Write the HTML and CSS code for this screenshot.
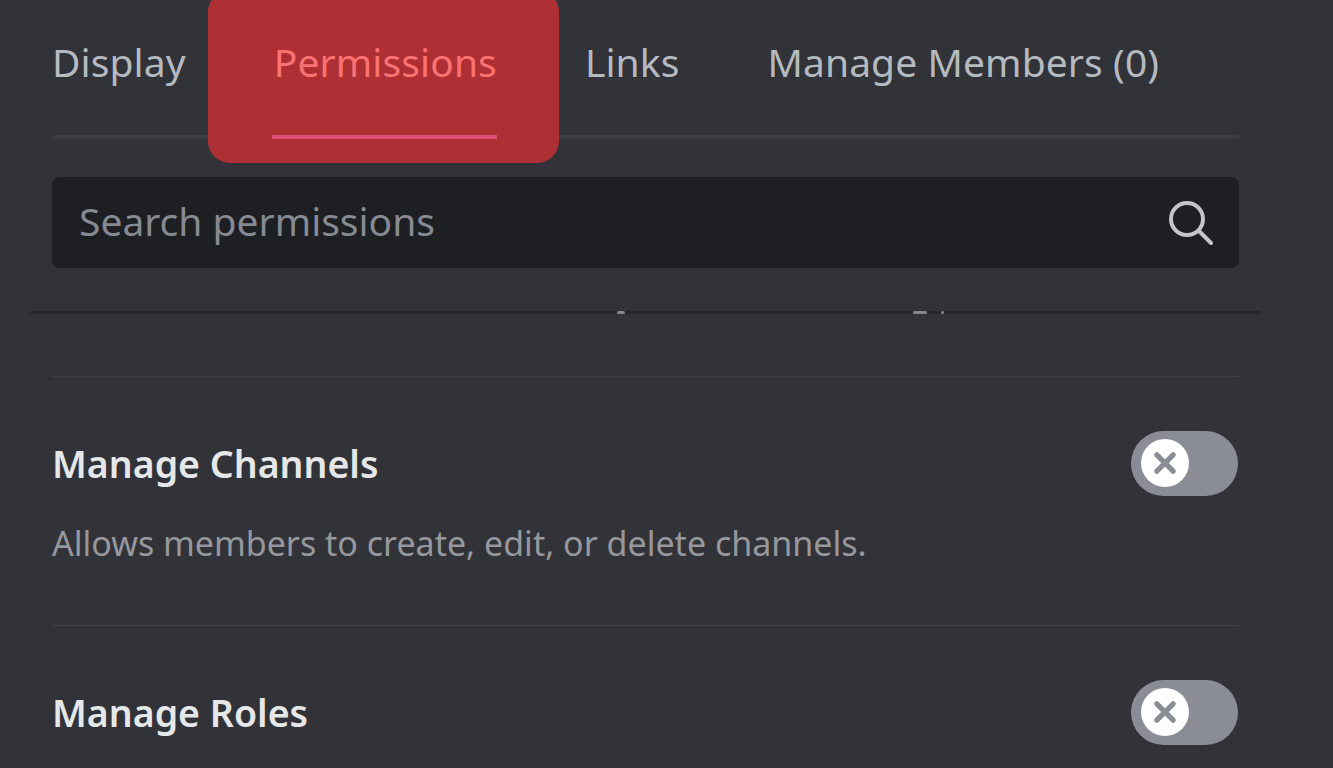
FILE: index.html
```html
<!DOCTYPE html>
<html lang="en">
<head>
    <meta charset="UTF-8">
    <meta name="viewport" content="width=device-width, initial-scale=1.0">
    <title>Edit Role - Permissions</title>
    <link rel="stylesheet" href="styles.css">
</head>
<body>
    <div class="page">
        <nav class="tabs">
            <a class="tab">Display</a>
            <a class="tab tab-active">Permissions</a>
            <a class="tab">Links</a>
            <a class="tab">Manage Members (0)</a>
        </nav>

        <div class="search">
            <span class="search-text">Search permissions</span>
            <svg class="search-icon" viewBox="0 0 46 46" fill="none" stroke="#c3c5cb" stroke-width="4" stroke-linecap="round">
                <circle cx="19" cy="19" r="16"></circle>
                <path d="M31 31 L43 43"></path>
            </svg>
        </div>

        <div class="divider">
            <span class="speck speck-a"></span>
            <span class="speck speck-b"></span>
            <span class="speck speck-c"></span>
        </div>

        <section class="perm perm-first">
            <div class="perm-head">
                <h3 class="perm-title">Manage Channels</h3>
                <div class="switch">
                    <span class="knob">
                        <svg viewBox="0 0 24 24" fill="none" stroke="#8a8c96" stroke-width="4.5" stroke-linecap="round">
                            <path d="M5 5 L19 19 M19 5 L5 19"></path>
                        </svg>
                    </span>
                </div>
            </div>
            <p class="perm-desc">Allows members to create, edit, or delete channels.</p>
        </section>

        <section class="perm">
            <div class="perm-head">
                <h3 class="perm-title">Manage Roles</h3>
                <div class="switch">
                    <span class="knob">
                        <svg viewBox="0 0 24 24" fill="none" stroke="#8a8c96" stroke-width="4.5" stroke-linecap="round">
                            <path d="M5 5 L19 19 M19 5 L5 19"></path>
                        </svg>
                    </span>
                </div>
            </div>
        </section>
    </div>
</body>
</html>
```

FILE: styles.css
```css
html, body {
    margin: 0;
    padding: 0;
    height: 100%;
    overflow: hidden;
    background-color: #313338;
}
body {
    font-family: "Noto Sans", "Open Sans", sans-serif;
    color: #b5bac1;
}
.page {
    padding: 0 94px 0 52px;
}

/* Tabs */
.tabs {
    display: flex;
    height: 135px;
    border-bottom: 4px solid #3a3c42;
}
.tab {
    position: relative;
    margin-right: 88px;
    padding-top: 35px;
    height: 100px;
    font-size: 39px;
    line-height: 54px;
    letter-spacing: 0.1px;
    color: #b5bac1;
    white-space: nowrap;
}
.tab-active {
    color: #fb7272;
    z-index: 1;
}
.tab-active::before {
    content: "";
    position: absolute;
    top: -10px;
    bottom: -28px;
    left: -66px;
    right: -62px;
    background-color: #ae3034;
    border-radius: 22px;
    z-index: -1;
}
.tab-active::after {
    content: "";
    position: absolute;
    left: -2px;
    right: 0;
    bottom: -4px;
    height: 4px;
    background-color: #dd5078;
}

/* Search */
.search {
    display: flex;
    align-items: center;
    justify-content: space-between;
    height: 91px;
    margin-top: 38px;
    padding: 0 25px 0 27px;
    background-color: #1e1f22;
    border-radius: 8px;
}
.search-text {
    font-size: 39px;
    line-height: 54px;
    margin-top: -4px;
    color: #868a93;
}
.search-icon {
    width: 46px;
    height: 46px;
}

/* Divider under search */
.divider {
    position: relative;
    height: 3px;
    margin: 43px -22px 0;
    background-color: #26272b;
}
.speck {
    position: absolute;
    top: 0;
    height: 3px;
    background-color: #85878c;
    border-radius: 2px;
}
.speck-a { left: 587px; width: 8px; }
.speck-b { left: 883px; width: 14px; }
.speck-c { left: 911px; width: 3px; }

/* Permission rows */
.perm {
    border-top: 1px solid #3f4147;
    padding-top: 54px;
    height: 194px;
}
.perm-first {
    margin-top: 62px;
}
.perm-head {
    display: flex;
    align-items: center;
    justify-content: space-between;
    height: 66px;
    margin-top: -1px;
}
.perm-title {
    margin: 0;
    font-size: 37.5px;
    font-weight: 600;
    color: #e6e7e9;
}
.perm-desc {
    margin: 25px 0 0;
    font-size: 34px;
    line-height: 44px;
    color: #96989e;
}
.switch {
    display: flex;
    align-items: center;
    width: 107px;
    height: 65px;
    margin-right: 1px;
    padding-left: 10px;
    box-sizing: border-box;
    background-color: #8a8c96;
    border-radius: 33px;
}
.knob {
    display: flex;
    align-items: center;
    justify-content: center;
    width: 48px;
    height: 48px;
    background-color: #fff;
    border-radius: 50%;
}
.knob svg {
    width: 28px;
    height: 28px;
}
```
